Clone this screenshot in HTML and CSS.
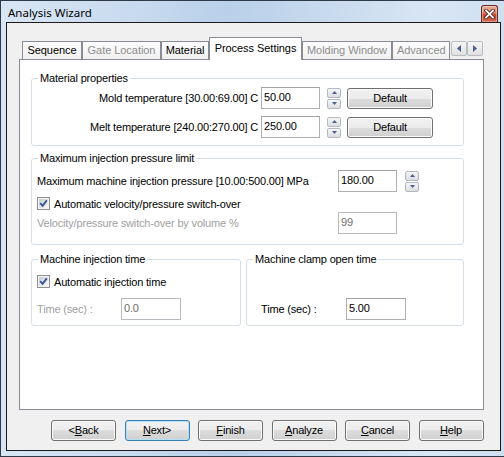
FILE: index.html
```html
<!DOCTYPE html>
<html>
<head>
<meta charset="utf-8">
<link rel="stylesheet" href="styles.css">
</head>
<body>
<div class="window">
  <div class="titlebar">
    <span class="title">Analysis Wizard</span>
    <div class="close">
      <svg width="11" height="10" viewBox="0 0 11 10">
        <path d="M2 1.5 L9 8.5 M9 1.5 L2 8.5" stroke="#4a1e14" stroke-width="3.4" stroke-linecap="square" fill="none"/>
        <path d="M2 1.5 L9 8.5 M9 1.5 L2 8.5" stroke="#ffffff" stroke-width="1.8" stroke-linecap="square" fill="none"/>
      </svg>
    </div>
  </div>
  <div class="client">
    <div class="tabctl">
      <div class="tabrow">
        <div class="tab t-seq">Sequence</div>
        <div class="tab t-gate off">Gate Location</div>
        <div class="tab t-mat">Material</div>
        <div class="tab t-proc sel">Process Settings</div>
        <div class="tab t-mold off">Molding Window</div>
        <div class="tab t-adv off">Advanced</div>
        <div class="scroller">
          <div class="sbtn"><svg width="4" height="7" viewBox="0 0 4 7"><path d="M4 0 L0 3.5 L4 7 Z" fill="#4b5f8f"/></svg></div>
          <div class="sbtn"><svg width="4" height="7" viewBox="0 0 4 7"><path d="M0 0 L4 3.5 L0 7 Z" fill="#4b5f8f"/></svg></div>
        </div>
      </div>
      <div class="page">
        <fieldset class="group g1">
          <legend>Material properties</legend>
          <div class="row r-first">
            <span class="lbl lbl-temp">Mold temperature [30.00:69.00] C</span>
            <span class="edit e-temp">50.00</span>
            <span class="spin s-temp"><span class="sp"><svg width="5" height="3" viewBox="0 0 5 3"><path d="M0 3 L2.5 0 L5 3 Z" fill="#4b5f8f"/></svg></span><span class="sp"><svg width="5" height="3" viewBox="0 0 5 3"><path d="M0 0 L2.5 3 L5 0 Z" fill="#4b5f8f"/></svg></span></span>
            <span class="btn b-default">Default</span>
          </div>
          <div class="row r-second">
            <span class="lbl lbl-temp">Melt temperature [240.00:270.00] C</span>
            <span class="edit e-temp">250.00</span>
            <span class="spin s-temp"><span class="sp"><svg width="5" height="3" viewBox="0 0 5 3"><path d="M0 3 L2.5 0 L5 3 Z" fill="#4b5f8f"/></svg></span><span class="sp"><svg width="5" height="3" viewBox="0 0 5 3"><path d="M0 0 L2.5 3 L5 0 Z" fill="#4b5f8f"/></svg></span></span>
            <span class="btn b-default">Default</span>
          </div>
        </fieldset>

        <fieldset class="group g2">
          <legend>Maximum injection pressure limit</legend>
          <div class="row r-pa">
            <span class="lbl lbl-p">Maximum machine injection pressure [10.00:500.00] MPa</span>
            <span class="edit e-p">180.00</span>
            <span class="spin s-p"><span class="sp"><svg width="5" height="3" viewBox="0 0 5 3"><path d="M0 3 L2.5 0 L5 3 Z" fill="#4b5f8f"/></svg></span><span class="sp"><svg width="5" height="3" viewBox="0 0 5 3"><path d="M0 0 L2.5 3 L5 0 Z" fill="#4b5f8f"/></svg></span></span>
          </div>
          <div class="row chk-row r-pb">
            <svg class="chk" width="13" height="13" viewBox="0 0 13 13">
              <defs><linearGradient id="cg1" x1="0" y1="0" x2="1" y2="1"><stop offset="0" stop-color="#c7ccd4"/><stop offset="1" stop-color="#f7f7f7"/></linearGradient></defs>
              <rect x="0.5" y="0.5" width="12" height="12" fill="#f4f4f4" stroke="#8e8f8f"/>
              <rect x="2" y="2" width="9" height="9" fill="url(#cg1)"/>
              <path d="M3.2 6.2 L5.6 8.8 L9.8 3.4" stroke="#3b5493" stroke-width="1.9" fill="none"/>
            </svg>
            <span class="chk-text">Automatic velocity/pressure switch-over</span>
          </div>
          <div class="row r-pc">
            <span class="lbl lbl-p dis">Velocity/pressure switch-over by volume %</span>
            <span class="edit e-p dis">99</span>
          </div>
        </fieldset>

        <div class="pair">
          <fieldset class="group g3">
            <legend>Machine injection time</legend>
            <div class="row chk-row r-ia">
              <svg class="chk" width="13" height="13" viewBox="0 0 13 13">
                <defs><linearGradient id="cg2" x1="0" y1="0" x2="1" y2="1"><stop offset="0" stop-color="#c7ccd4"/><stop offset="1" stop-color="#f7f7f7"/></linearGradient></defs>
                <rect x="0.5" y="0.5" width="12" height="12" fill="#f4f4f4" stroke="#8e8f8f"/>
                <rect x="2" y="2" width="9" height="9" fill="url(#cg2)"/>
                <path d="M3.2 6.2 L5.6 8.8 L9.8 3.4" stroke="#3b5493" stroke-width="1.9" fill="none"/>
              </svg>
              <span class="chk-text">Automatic injection time</span>
            </div>
            <div class="row r-ib">
              <span class="lbl lbl-t3 dis">Time (sec) :</span>
              <span class="edit e-t dis">0.0</span>
            </div>
          </fieldset>
          <fieldset class="group g4">
            <legend>Machine clamp open time</legend>
            <div class="row r-cb">
              <span class="lbl lbl-t4">Time (sec) :</span>
              <span class="edit e-t">5.00</span>
            </div>
          </fieldset>
        </div>
      </div>
    </div>
    <div class="buttons">
      <span class="btn b-nav">&lt;<u>B</u>ack</span>
      <span class="btn b-nav focus"><u>N</u>ext&gt;</span>
      <span class="btn b-nav"><u>F</u>inish</span>
      <span class="btn b-nav"><u>A</u>nalyze</span>
      <span class="btn b-nav"><u>C</u>ancel</span>
      <span class="btn b-nav"><u>H</u>elp</span>
    </div>
  </div>
</div>
</body>
</html>
```

FILE: styles.css
```css
* { box-sizing: border-box; }
html, body {
  margin: 0;
  padding: 0;
  width: 504px;
  height: 457px;
  overflow: hidden;
  background: #ffffff;
}
.window {
  width: 507px;
  height: 457px;
  border: 1px solid #2f3b48;
  padding: 0 5px 5px 5px;
  display: flex;
  flex-direction: column;
  background: linear-gradient(to right, #d9e6f4 0%, #c9dbef 25%, #b9d0ea 45%, #c8daee 65%, #d9e6f4 85%, #cfdff0 100%);
  font-family: "Liberation Sans", Arial, sans-serif;
  font-size: 11px;
  letter-spacing: -0.17px;
  color: #000;
}
.titlebar {
  height: 21px;
  display: flex;
  align-items: flex-end;
  justify-content: space-between;
  padding: 0 3px 0 2px;
}
.title {
  font-family: "Noto Sans", sans-serif;
  font-size: 11.5px;
  letter-spacing: 0;
  line-height: 16px;
  align-self: center;
  margin-top: 3px;
}
.close {
  width: 17px;
  height: 17px;
  border: 1px solid #6b2c1f;
  border-bottom: none;
  border-radius: 3px 3px 0 0;
  background: linear-gradient(#eab0a0 0%, #d98068 45%, #c4462c 55%, #d26a4f 100%);
  box-shadow: inset 0 0 0 1px rgba(255,255,255,0.35);
  display: flex;
  align-items: center;
  justify-content: center;
}
.client {
  flex: 1;
  border: 1px solid #1c1c1c;
  background: #f0f0f0;
}
.tabctl {
  margin: 14px 0 0 12px;
  width: 465px;
}
.tabrow {
  height: 22px;
  display: flex;
  align-items: flex-end;
  padding-left: 3px;
}
.tab {
  height: 18px;
  border: 1px solid #898c95;
  border-bottom: none;
  background: linear-gradient(#fdfdfd, #f0f0f0);
  font-size: 11px;
  letter-spacing: -0.05px;
  line-height: 16px;
  text-align: center;
  white-space: nowrap;
  overflow: hidden;
}
.tab.off { color: #8d8d8d; }
.tab.sel {
  height: 23px;
  margin-bottom: -1px;
  background: #ffffff;
  position: relative;
  z-index: 1;
  line-height: 21px;
}
.t-seq { width: 60px; }
.t-gate { width: 79px; }
.t-mat { width: 48px; }
.t-proc { width: 93px; }
.t-mold { width: 90px; }
.t-adv { width: 58px; text-align: left; padding-left: 4px; }
.scroller {
  display: flex;
  margin-left: 1px;
  align-self: flex-start;
  margin-top: 4px;
}
.sbtn {
  width: 16px;
  height: 15px;
  border: 1px solid #b8bcc4;
  border-radius: 2px;
  background: linear-gradient(#f6f6f6, #e0e0e0);
  display: flex;
  align-items: center;
  justify-content: center;
}
.page {
  height: 351px;
  border: 1px solid #898c95;
  background: #ffffff;
  padding: 12px 19px 0 11px;
}
.group {
  margin: 0;
  padding: 0;
  border: 1px solid #d5dfe5;
  border-radius: 3px;
  min-width: 0;
}
.group legend {
  margin-left: 6px;
  padding: 0 2px;
  line-height: 13px;
  height: 13px;
}
.row {
  display: flex;
  align-items: center;
  white-space: nowrap;
}
.lbl { display: block; }
.dis { color: #a0a0a0; }
.edit {
  display: block;
  height: 22px;
  border: 1px solid #acafb5;
  border-top-color: #9ea1a7;
  background: #fff;
  padding: 3px 0 0 2px;
  line-height: 13px;
}
.edit.dis { color: #6d6d6d; border-color: #b7babf; }
.spin {
  display: flex;
  flex-direction: column;
  width: 14px;
  height: 21px;
  justify-content: space-between;
}
.sp {
  height: 10px;
  border: 1px solid #b3b9c2;
  border-radius: 2px;
  background: linear-gradient(#f7f7f7, #dcdde0);
  display: flex;
  align-items: center;
  justify-content: center;
}
.btn {
  display: flex;
  align-items: center;
  justify-content: center;
  height: 21px;
  border: 1px solid #707070;
  border-radius: 3px;
  background: linear-gradient(#f2f2f2 0%, #ebebeb 50%, #dddddd 50%, #cfcfcf 100%);
  box-shadow: inset 0 0 0 1px #fbfbfb;
  line-height: 13px;
}
.btn.focus {
  border-color: #3c7fb1;
  box-shadow: inset 0 0 0 1px #b4e0f8;
}
.btn u { text-decoration: underline; text-underline-offset: 1px; }

/* group 1 */
.g1 { padding-bottom: 7px; }
.r-first { margin-top: 2px; }
.r-second { margin-top: 7px; }
.lbl-temp { width: 226px; text-align: right; }
.e-temp { width: 59px; margin-left: 3px; }
.s-temp { margin-left: 7px; }
.b-default { width: 86px; margin-left: 6px; }

/* group 2 */
.g2 { margin-top: 6px; padding-bottom: 10px; }
.g2 .row, .g3 .row { padding-left: 5px; }
.r-pa { margin-top: 5px; }
.lbl-p { width: 301px; }
.e-p { width: 59px; }
.s-p { margin-left: 8px; }
.chk-row { height: 15px; }
.r-pb { margin-top: 4px; }
.chk-text { margin-left: 4px; }
.r-pc { margin-top: 1px; }

/* groups 3 + 4 */
.pair {
  display: grid;
  grid-template-columns: 210px 218px;
  column-gap: 5px;
  margin-top: 8px;
}
.g3 { padding-bottom: 5px; }
.r-ia { margin-top: 8px; }
.r-ib { margin-top: 9px; }
.lbl-t3 { width: 84px; }
.e-t { width: 60px; }
.g4 {
  display: flex;
  flex-direction: column;
  justify-content: flex-end;
  padding-bottom: 5px;
}
.g4 .row { padding-left: 14px; }
.lbl-t4 { width: 85px; }

/* bottom buttons */
.buttons {
  display: flex;
  gap: 8.5px;
  margin: 10px 0 0 44px;
}
.b-nav { width: 65px; }
```
